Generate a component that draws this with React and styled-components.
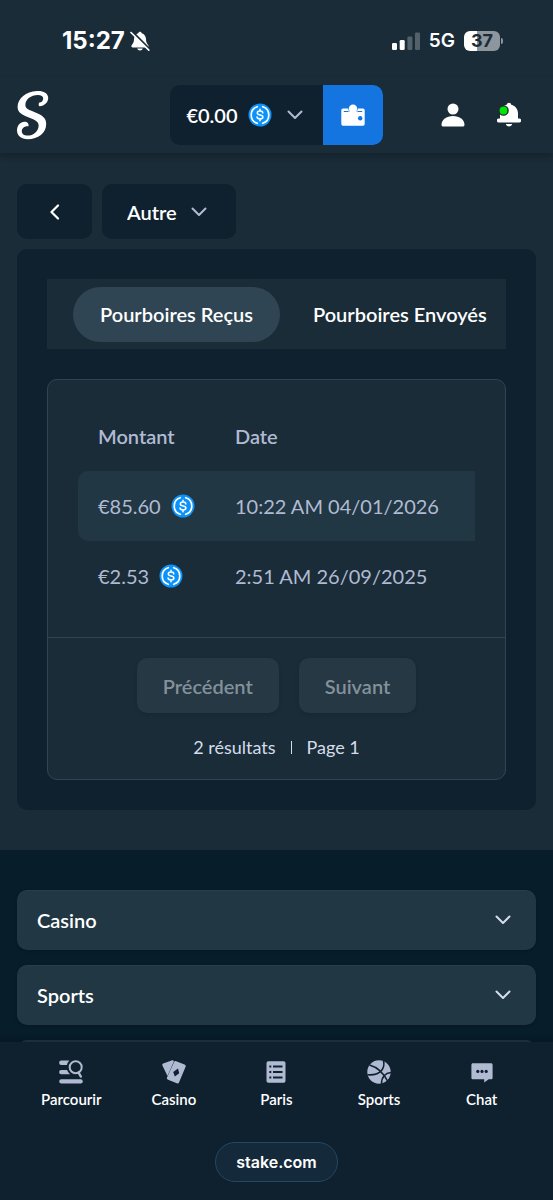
import React, { useState } from 'react';
import styled, { createGlobalStyle } from 'styled-components';

const GlobalStyle = createGlobalStyle`
  * {
    box-sizing: border-box;
  }

  body {
    margin: 0;
    background: #0f212e;
    color: #fff;
    font-family: Lato, 'Open Sans', sans-serif;
    font-size: 20px;
    line-height: 24px;
  }

  button, select {
    font: inherit;
    color: inherit;
    border: none;
    padding: 0;
    margin: 0;
    background: none;
    cursor: pointer;
  }

  a {
    color: inherit;
    text-decoration: none;
  }

  svg {
    display: block;
    flex-shrink: 0;
  }
`;

const TRANSACTIONS = [
  { amount: '€85.60', date: '10:22 AM 04/01/2026' },
  { amount: '€2.53', date: '2:51 AM 26/09/2025' },
];

/* Icons */

const Chevron = ({ size = 16, color = '#b1bad3' }) => (
  <svg width={size} height={size} viewBox="0 0 16 16" fill="none" aria-hidden="true">
    <path d="M1.5 4.5 8 11l6.500-6.500" stroke={color} strokeWidth="2" strokeLinecap="round" strokeLinejoin="round" />
  </svg>
);

const BackIcon = () => (
  <svg width="16" height="16" viewBox="0 0 16 16" fill="none" aria-hidden="true">
    <path d="M11 1.500 4.500 8l6.500 6.500" stroke="#fff" strokeWidth="2.200" strokeLinecap="round" strokeLinejoin="round" />
  </svg>
);

const CoinIcon = () => (
  <svg width="24" height="24" viewBox="0 0 24 24" fill="none" aria-hidden="true">
    <circle cx="12" cy="12" r="11.500" fill="#0b93fb" />
    <g stroke="#fff" strokeLinecap="round">
      <path d="M9.300 3.700a8.700 8.700 0 0 0 0 16.600M14.700 3.700a8.700 8.700 0 0 1 0 16.600" strokeWidth="1.700" />
      <path d="M14.800 9.900c-.2-1.200-1.200-1.800-2.800-1.800s-2.700.7-2.700 1.900c0 2.900 5.600 1.200 5.600 4 0 1.200-1.200 1.900-2.900 1.900s-2.800-.8-3-2M12 6.300v1.800M12 15.900v1.800" strokeWidth="1.500" />
    </g>
  </svg>
);

const Logo = () => (
  <svg width="34" height="50" viewBox="0 0 34 50" fill="none" aria-hidden="true">
    <path
      d="M23.500 16.300C28.500 16 32.500 12 32.200 7.500 31.800 2.800 27 .6 20.800 1 10 1.700 1.600 8.500 1.600 16.800c0 4.700 2.800 7.200 8.800 9.700l6.200 2.600c4.400 1.900 6 3.600 6 6.600 0 5.500-5.200 9.900-11 9.900-3.500 0-5.800-1.600-5.800-4.400 0-3.300 3-5.600 6.700-4.900.5-2.600-1-4.600-4-4.600-4.200 0-7.500 4-7.500 8.600 0 5.400 4.200 8.900 10.800 8.900 10.400 0 18.400-6.300 18.400-15.200 0-5.500-3.200-8.300-9.600-11l-5.800-2.500c-4.200-1.800-5.400-3.200-5.400-5.600 0-5.700 5.600-9.900 12.400-9.900 3.400 0 5.400 1.200 5.400 3.500 0 2.300-1.700 4-4.200 4.300-.5 1.700-.4 2.900.5 3.500Z"
      fill="#fff"
    />
  </svg>
);

const WalletIcon = () => (
  <svg width="24" height="24" viewBox="0 0 24 24" aria-hidden="true">
    <path fill="#fff" d="M2 5.500H22A1.800 1.800 0 0 1 23.700 7.300V21A1.700 1.700 0 0 1 22 22.700H2A1.700 1.700 0 0 1 .3 21V7.300A1.800 1.800 0 0 1 2 5.500Z" />
    <circle cx="12" cy="5.500" r="4.800" fill="#1475e1" />
    <circle cx="12" cy="5.700" r="4.200" fill="#fff" />
    <path fill="#fff" d="M7.500 8.500h9V13h-9z" />
    <path d="M2.800 8.500h4.700M16.500 8.500h4.700" stroke="#1475e1" strokeWidth="1.200" fill="none" />
    <circle cx="19.200" cy="15.300" r="2.200" fill="#1475e1" />
  </svg>
);

const UserIcon = () => (
  <svg width="24" height="24" viewBox="0 0 24 24" fill="#fff" aria-hidden="true">
    <circle cx="12" cy="6" r="5.500" />
    <path d="M12 13c6.600 0 11.500 3.700 11.500 8.700 0 1-.7 1.800-1.800 1.800H2.300c-1.100 0-1.800-.8-1.800-1.800C.5 16.700 5.400 13 12 13Z" />
  </svg>
);

const BellIcon = () => (
  <svg width="24" height="26" viewBox="0 0 24 26" aria-hidden="true">
    <path fill="#fff" d="M12 .8c1.200 0 2.100.8 2.300 1.900C18.400 3.800 21 7.200 21 11.300V16.500h1.200a1.800 1.800 0 0 1 0 4H1.800a1.800 1.800 0 0 1 0-4H3v-5.200c0-4.100 2.600-7.500 6.700-8.600C9.900 1.600 10.800.8 12 .8Z" />
    <path fill="#fff" d="M8.800 22h6.400c-.4 1.500-1.600 2.500-3.200 2.500S9.200 23.500 8.800 22Z" />
    <circle cx="6.500" cy="8.500" r="4.600" fill="#00e701" stroke="#1a2c38" strokeWidth="1.400" />
  </svg>
);

const SilentIcon = () => (
  <svg width="20" height="20" viewBox="0 0 20 20" aria-hidden="true">
    <path fill="#fff" d="M10 .8c.9 0 1.500.6 1.700 1.400 2.700.8 4.300 3.100 4.300 6 0 4.500 2.600 5.200 2.600 7 0 .7-.4 1.200-1.200 1.200H2.600c-.8 0-1.200-.5-1.200-1.200 0-1.800 2.600-2.500 2.600-7 0-2.900 1.600-5.200 4.300-6C8.500 1.400 9.100.8 10 .8ZM7.200 17.500h5.600c-.3 1.200-1.400 2-2.800 2s-2.500-.8-2.800-2Z" />
    <path d="m2.300.6 18 18" stroke="#1a2c38" strokeWidth="2" />
    <path d="m1 1.500 17.800 17.600" stroke="#fff" strokeWidth="1.700" strokeLinecap="round" />
  </svg>
);

const SignalIcon = () => (
  <svg width="28" height="18" viewBox="0 0 28 18" fill="#fff" aria-hidden="true">
    <rect x="0" y="11" width="5" height="7" rx="1.300" />
    <rect x="7.700" y="8" width="5" height="10" rx="1.300" />
    <rect x="15.400" y="4.500" width="5" height="13.500" rx="1.300" opacity="0.25" />
    <rect x="23" y="0.500" width="5" height="17.500" rx="1.300" opacity="0.25" />
  </svg>
);

const BrowseIcon = () => (
  <svg width="24" height="24" viewBox="0 0 24 24" fill="#b1bad3" aria-hidden="true">
    <path d="M2.300.5h8A9 9 0 0 0 8 4.900H2.300a2.200 2.200 0 0 1 0-4.400ZM2.300 9.900h5.800a9 9 0 0 0 3 4.400H2.300a2.200 2.200 0 0 1 0-4.400ZM2.300 19.300h19.400a2.100 2.100 0 0 1 0 4.200H2.300a2.100 2.100 0 0 1 0-4.200Z" />
    <circle cx="16.700" cy="7.300" r="6" fill="none" stroke="#b1bad3" strokeWidth="2" />
    <path d="m19.500 12.500 2.300 4" stroke="#b1bad3" strokeWidth="2.500" strokeLinecap="round" />
  </svg>
);

const CardsIcon = () => (
  <svg width="24" height="24" viewBox="0 0 24 24" aria-hidden="true">
    <path fill="#b1bad3" d="M1.200 3.600 9.600.5c1-.4 2 .1 2.300.9L5.500 16 .4 5.500c-.3-.8 0-1.600.8-1.900Z" />
    <path fill="#b1bad3" d="m14.200 1.200 8.300 3.300c1.200.5 1.500 1.300 1.100 2.300l-6.500 15.400c-.4 1.100-1.300 1.500-2.300 1.100l-8.700-3.500c-1.100-.5-1.500-1.300-1.100-2.300L12 2.200c.4-1 1.200-1.400 2.200-1Z" />
    <path fill="#0f212e" d="m16 8.500 1.200 4.700-4.400 3.200-1.600-4.500L16 8.500Z" />
  </svg>
);

const BetsIcon = () => (
  <svg width="24" height="24" viewBox="0 0 24 24" aria-hidden="true">
    <rect x="2.500" y="1.200" width="19" height="21.600" rx="1.800" fill="#b1bad3" />
    <path d="M5.300 6.500h2M9 6.500h9.500M5.300 12h2M9 12h9.500M5.300 17.500h2M9 17.500h9.500" stroke="#0f212e" strokeWidth="1.900" />
  </svg>
);

const BallIcon = () => (
  <svg width="24" height="24" viewBox="0 0 24 24" aria-hidden="true">
    <circle cx="12" cy="12" r="11.700" fill="#b1bad3" />
    <g fill="none" stroke="#0f212e" strokeWidth="1.600">
      <path d="M2.500 5c7 2 14 8 18 16" />
      <path d="M16.500.8c1.500 6-1.500 15.200-16 14" />
      <path d="M24 12.500c-5.500.5-9.500 4.500-9.500 11.500" />
    </g>
  </svg>
);

const ChatIcon = () => (
  <svg width="24" height="24" viewBox="0 0 24 24" aria-hidden="true">
    <path fill="#b1bad3" d="M3 3.200h18c.9 0 1.600.7 1.600 1.600v12.900c0 .9-.7 1.600-1.600 1.600h-2.300l-4.500 3.300v-3.300H3c-.9 0-1.600-.7-1.600-1.600V4.800c0-.9.7-1.600 1.600-1.600Z" />
    <g fill="#0f212e">
      <circle cx="7.800" cy="11.400" r="1.600" />
      <circle cx="12" cy="11.400" r="1.600" />
      <circle cx="16.200" cy="11.400" r="1.600" />
    </g>
  </svg>
);

const NAV_ITEMS = [
  { label: 'Parcourir', icon: <BrowseIcon /> },
  { label: 'Casino', icon: <CardsIcon /> },
  { label: 'Paris', icon: <BetsIcon /> },
  { label: 'Sports', icon: <BallIcon /> },
  { label: 'Chat', icon: <ChatIcon /> },
];

const App = () => {
  const [tab, setTab] = useState('received');
  const [category, setCategory] = useState('Autre');
  const [openSection, setOpenSection] = useState('');

  const toggleSection = (name) => {
    setOpenSection(openSection === name ? '' : name);
  };

  return (
    <Shell>
      <GlobalStyle />
      <StatusBar>
        <StatusGroup $gap="5px">
          <Clock>15:27</Clock>
          <SilentIcon />
        </StatusGroup>
        <StatusGroup $gap="9px">
          <SignalIcon />
          <Network>5G</Network>
          <BatteryWrap>
            <Battery>37</Battery>
            <BatteryTip />
          </BatteryWrap>
        </StatusGroup>
      </StatusBar>

      <Header>
        <LogoLink href="#" aria-label="Stake">
          <Logo />
        </LogoLink>
        <Wallet>
          <Balance type="button">
            €0.00
            <CoinIcon />
            <ChevronSlot>
              <Chevron />
            </ChevronSlot>
          </Balance>
          <WalletButton type="button" aria-label="Portefeuille">
            <WalletIcon />
          </WalletButton>
        </Wallet>
        <HeaderActions>
          <IconButton type="button" aria-label="Profil">
            <UserIcon />
          </IconButton>
          <IconButton type="button" aria-label="Notifications">
            <BellIcon />
          </IconButton>
        </HeaderActions>
      </Header>

      <Scroller>
        <Main>
          <Filters>
            <BackButton type="button" aria-label="Retour">
              <BackIcon />
            </BackButton>
            <SelectWrap>
              <Select
                aria-label="Catégorie"
                value={category}
                onChange={(e) => setCategory(e.target.value)}
              >
                <option value="Autre">Autre</option>
              </Select>
              <Chevron />
            </SelectWrap>
          </Filters>

          <Panel>
            <Tabs role="tablist">
              <Tab
                type="button"
                role="tab"
                aria-selected={tab === 'received'}
                $active={tab === 'received'}
                onClick={() => setTab('received')}
              >
                Pourboires Reçus
              </Tab>
              <Tab
                type="button"
                role="tab"
                aria-selected={tab === 'sent'}
                $active={tab === 'sent'}
                onClick={() => setTab('sent')}
              >
                Pourboires Envoyés
              </Tab>
            </Tabs>

            <TableCard>
              <TableArea>
                <Table>
                  <thead>
                    <tr>
                      <th>Montant</th>
                      <th>Date</th>
                    </tr>
                  </thead>
                  <tbody>
                    {TRANSACTIONS.map((item) => (
                      <tr key={item.date}>
                        <td>
                          <Amount>
                            {item.amount}
                            <CoinIcon />
                          </Amount>
                        </td>
                        <td>{item.date}</td>
                      </tr>
                    ))}
                  </tbody>
                </Table>
              </TableArea>
              <Pagination>
                <PageButtons>
                  <PageButton type="button" disabled>Précédent</PageButton>
                  <PageButton type="button" disabled>Suivant</PageButton>
                </PageButtons>
                <PageInfo>
                  <span>2 résultats</span>
                  <Divider />
                  <span>Page 1</span>
                </PageInfo>
              </Pagination>
            </TableCard>
          </Panel>
        </Main>

        <Footer>
          {['Casino', 'Sports'].map((name) => (
            <Section
              key={name}
              type="button"
              aria-expanded={openSection === name}
              onClick={() => toggleSection(name)}
            >
              {name}
              <Chevron color="#d5dceb" />
            </Section>
          ))}
          <SectionPeek />
        </Footer>
      </Scroller>

      <BottomBar>
        <Nav>
          {NAV_ITEMS.map((item) => (
            <NavLink href="#" key={item.label}>
              {item.icon}
              {item.label}
            </NavLink>
          ))}
        </Nav>
        <AddressPill href="#">stake.com</AddressPill>
      </BottomBar>
    </Shell>
  );
};

const Shell = styled.div`
  display: flex;
  flex-direction: column;
  height: 100vh;
  background: #1a2c38;
`;

const StatusBar = styled.div`
  display: flex;
  align-items: center;
  justify-content: space-between;
  height: 77px;
  padding: 4px 50px 0 62px;
  font-family: Inter, sans-serif;
`;

const StatusGroup = styled.div`
  display: flex;
  align-items: center;
  gap: ${(props) => props.$gap};
`;

const Clock = styled.span`
  font-size: 24px;
  font-weight: 700;
`;

const Network = styled.span`
  font-size: 19px;
  font-weight: 600;
`;

const BatteryWrap = styled.span`
  display: flex;
  align-items: center;
  gap: 1px;
`;

const Battery = styled.span`
  width: 36px;
  height: 20px;
  border-radius: 6px;
  background: linear-gradient(to right, #fff 37%, #8d969c 37%);
  color: #1a2c38;
  font-size: 18px;
  font-weight: 700;
  line-height: 20px;
  text-align: center;
`;

const BatteryTip = styled.span`
  width: 2px;
  height: 6px;
  border-radius: 0 2px 2px 0;
  background: #8d969c;
`;

const Header = styled.header`
  display: grid;
  grid-template-columns: 1fr auto 1fr;
  align-items: center;
  height: 76px;
  padding: 0 32px 0 16px;
  background: #1a2c38;
  box-shadow: 0 4px 6px rgba(0, 0, 0, 0.2);
  z-index: 1;
`;

const LogoLink = styled.a`
  justify-self: start;
`;

const Wallet = styled.div`
  display: flex;
  height: 60px;
  margin-left: 16px;
  border-radius: 10px;
  overflow: hidden;
  background: #0f212e;
`;

const Balance = styled.button`
  display: flex;
  align-items: center;
  gap: 10px;
  padding: 0 20px 0 16px;
  font-weight: 600;
`;

const ChevronSlot = styled.span`
  margin-left: 5px;
`;

const WalletButton = styled.button`
  display: grid;
  place-items: center;
  width: 60px;
  background: #1475e1;
`;

const HeaderActions = styled.div`
  display: flex;
  justify-content: flex-end;
  gap: 32px;
`;

const IconButton = styled.button`
  display: grid;
  place-items: center;
  width: 24px;
  height: 28px;
`;

const Scroller = styled.div`
  flex: 1;
  min-height: 0;
  overflow-y: auto;
  scrollbar-width: none;
`;

const Main = styled.main`
  display: flex;
  flex-direction: column;
  gap: 10px;
  padding: 31px 17px 40px;
`;

const Filters = styled.div`
  display: flex;
  gap: 10px;
`;

const BackButton = styled.button`
  display: grid;
  place-items: center;
  width: 75px;
  height: 55px;
  border-radius: 10px;
  background: #0f212e;
`;

const SelectWrap = styled.div`
  display: grid;
  grid-template-columns: auto 45px;
  align-items: center;
  height: 55px;
  border-radius: 10px;
  background: #0f212e;

  svg {
    grid-area: 1 / 2;
    pointer-events: none;
  }
`;

const Select = styled.select`
  grid-area: 1 / 1 / 2 / 3;
  height: 100%;
  padding: 0 59px 0 25px;
  border-radius: 10px;
  appearance: none;
  font-weight: 600;
`;

const Panel = styled.section`
  display: flex;
  flex-direction: column;
  gap: 30px;
  padding: 30px;
  border-radius: 10px;
  background: #0f212e;
`;

const Tabs = styled.div`
  display: flex;
  align-items: center;
  gap: 6px;
  height: 70px;
  padding-left: 26px;
  overflow: hidden;
  background: #1a2c38;
`;

const Tab = styled.button`
  flex-shrink: 0;
  height: 55px;
  padding: 0 27px;
  border-radius: 28px;
  background: ${(props) => (props.$active ? '#2f4553' : 'transparent')};
  font-weight: 600;
`;

const TableCard = styled.div`
  border: 1px solid #2f4553;
  border-radius: 10px;
  background: #1a2c38;
`;

const TableArea = styled.div`
  padding: 30px 30px 26px;
`;

const Table = styled.table`
  width: 100%;
  border-collapse: collapse;
  color: #b1bad3;
  text-align: left;

  th {
    height: 61px;
    padding: 0 20px 10px;
    font-weight: 600;
  }

  td {
    height: 70px;
    padding: 0 20px;
    white-space: nowrap;
  }

  th:first-child, td:first-child {
    width: 137px;
    padding-right: 0;
    border-radius: 10px 0 0 10px;
  }

  tbody tr:nth-child(odd) td {
    background: #213743;
  }
`;

const Amount = styled.span`
  display: flex;
  align-items: center;
  gap: 10px;
`;

const Pagination = styled.div`
  display: flex;
  flex-direction: column;
  align-items: center;
  gap: 22px;
  padding: 20px;
  border-top: 1px solid #2f4553;
`;

const PageButtons = styled.div`
  display: flex;
  gap: 20px;
`;

const PageButton = styled.button`
  height: 55px;
  padding: 0 26px;
  border-radius: 10px;
  background: #253844;
  box-shadow: 0 2px 4px rgba(0, 0, 0, 0.1);
  color: #84919a;
  font-weight: 600;
  cursor: not-allowed;
`;

const PageInfo = styled.div`
  display: flex;
  align-items: center;
  gap: 15px;
  color: #d5dceb;
  font-size: 18px;
`;

const Divider = styled.span`
  width: 1px;
  height: 13px;
  background: #d5dceb;
`;

const Footer = styled.footer`
  display: flex;
  flex-direction: column;
  gap: 15px;
  padding: 40px 17px;
  background: #071d2a;
`;

const Section = styled.button`
  display: flex;
  align-items: center;
  justify-content: space-between;
  height: 60px;
  padding: 0 25px 0 20px;
  border-radius: 10px;
  background: #213743;
  box-shadow: 0 1px 3px rgba(0, 0, 0, 0.2), inset 0 1px 0 rgba(255, 255, 255, 0.04);
  font-weight: 600;
`;

const SectionPeek = styled.div`
  height: 60px;
  border-radius: 10px;
  background: #213743;
`;

const BottomBar = styled.div`
  display: flex;
  flex-direction: column;
  align-items: center;
  gap: 33px;
  padding: 18px 20px;
  background: #0f212e;
  box-shadow: 0 -3px 6px rgba(0, 0, 0, 0.2);
  z-index: 1;
`;

const Nav = styled.nav`
  display: grid;
  grid-template-columns: repeat(5, 1fr);
  width: 100%;
`;

const NavLink = styled.a`
  display: flex;
  flex-direction: column;
  align-items: center;
  gap: 5px;
  font-size: 15px;
  font-weight: 600;
  line-height: 20px;
`;

const AddressPill = styled.a`
  height: 40px;
  padding: 0 20px;
  border: 1px solid #234864;
  border-radius: 20px;
  background: #14293a;
  font-family: Inter, sans-serif;
  font-size: 16px;
  font-weight: 600;
  line-height: 38px;
`;

export default App;
